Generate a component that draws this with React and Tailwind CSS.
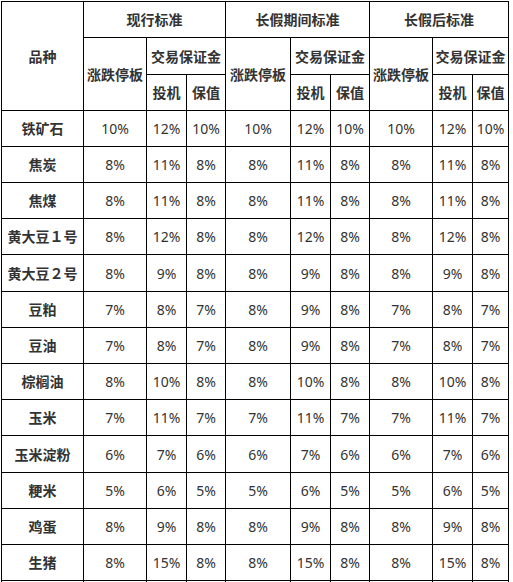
import React from "react";

const groups = ["现行标准", "长假期间标准", "长假后标准"];

// 品种, then [涨跌停板, 投机, 保值] for each of the three periods
const rows = [
  ["铁矿石", [10, 12, 10], [10, 12, 10], [10, 12, 10]],
  ["焦炭", [8, 11, 8], [8, 11, 8], [8, 11, 8]],
  ["焦煤", [8, 11, 8], [8, 11, 8], [8, 11, 8]],
  ["黄大豆１号", [8, 12, 8], [8, 12, 8], [8, 12, 8]],
  ["黄大豆２号", [8, 9, 8], [8, 9, 8], [8, 9, 8]],
  ["豆粕", [7, 8, 7], [8, 9, 8], [7, 8, 7]],
  ["豆油", [7, 8, 7], [8, 9, 8], [7, 8, 7]],
  ["棕榈油", [8, 10, 8], [8, 10, 8], [8, 10, 8]],
  ["玉米", [7, 11, 7], [7, 11, 7], [7, 11, 7]],
  ["玉米淀粉", [6, 7, 6], [6, 7, 6], [6, 7, 6]],
  ["粳米", [5, 6, 5], [5, 6, 5], [5, 6, 5]],
  ["鸡蛋", [8, 9, 8], [8, 9, 8], [8, 9, 8]],
  ["生猪", [8, 15, 8], [8, 15, 8], [8, 15, 8]]
];

const cell = "border border-black text-center align-middle p-0";

export default function App() {
  return (
    <div
      className="bg-white min-h-screen pl-px pt-px text-[14px] text-[#333]"
      style={{ fontFamily: '"Noto Sans", "Noto Sans CJK SC", sans-serif' }}
    >
      <table className="border-collapse table-fixed w-[507px]">
        <colgroup>
          <col className="w-[82px]" />
          <col className="w-[63px]" />
          <col className="w-[40px]" />
          <col className="w-[39px]" />
          <col className="w-[65px]" />
          <col className="w-[40px]" />
          <col className="w-[39px]" />
          <col className="w-[63px]" />
          <col className="w-[40px]" />
          <col className="w-[36px]" />
        </colgroup>
        <thead className="font-bold">
          {/* header row 1 */}
          <tr className="h-[36px]">
            <th rowSpan={3} className={cell}>品种</th>
            {groups.map((g) => (
              <th key={g} colSpan={3} className={cell}>{g}</th>
            ))}
          </tr>
          {/* header row 2 */}
          <tr className="h-[37px]">
            {groups.map((g) => (
              <React.Fragment key={g}>
                <th rowSpan={2} className={`${cell} whitespace-nowrap`}>涨跌停板</th>
                <th colSpan={2} className={`${cell} whitespace-nowrap`}>交易保证金</th>
              </React.Fragment>
            ))}
          </tr>
          {/* header row 3 */}
          <tr className="h-[36px]">
            {groups.map((g) => (
              <React.Fragment key={g}>
                <th className={cell}>投机</th>
                <th className={cell}>保值</th>
              </React.Fragment>
            ))}
          </tr>
        </thead>
        <tbody>
          {rows.map(([name, ...periods], i) => (
            <tr key={name} className={i === 4 || i === 9 ? "h-[37px]" : "h-[36px]"}>
              <td className={`${cell} font-bold whitespace-nowrap`}>{name}</td>
              {periods.map((vals, j) =>
                vals.map((v, k) => (
                  <td key={`${j}-${k}`} className={cell}>{v}%</td>
                ))
              )}
            </tr>
          ))}
          {/* table runs on below the fold */}
          <tr className="h-[36px]">
            {Array.from({ length: 10 }).map((_, i) => (
              <td key={i} className={cell}></td>
            ))}
          </tr>
        </tbody>
      </table>
    </div>
  );
}
